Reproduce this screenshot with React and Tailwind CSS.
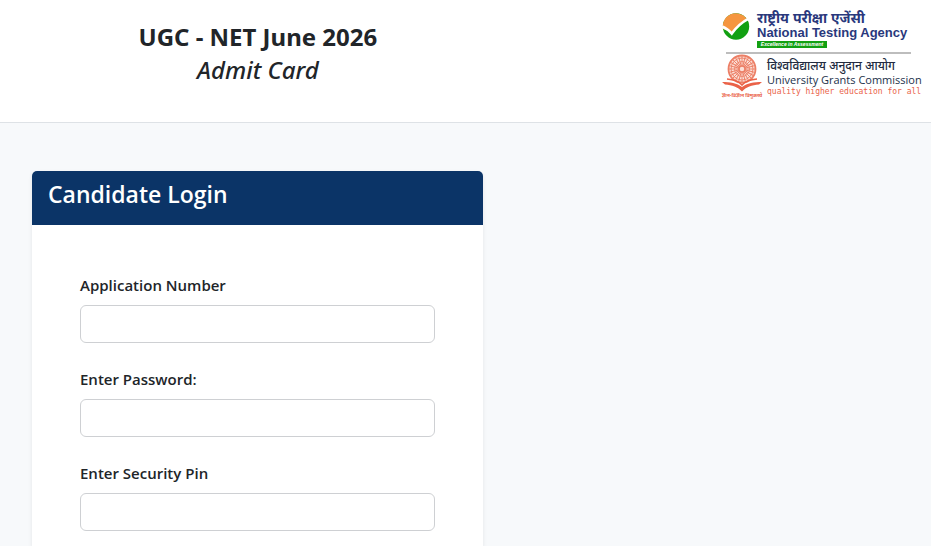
import React from 'react';

const fields = [
  { id: 'applicationNumber', label: 'Application Number', type: 'text' },
  { id: 'password', label: 'Enter Password:', type: 'password' },
  { id: 'securityPin', label: 'Enter Security Pin', type: 'text' },
];

const spokes = Array.from({ length: 24 }, (_, i) => i * 15);

const NtaMark = () => (
  <svg viewBox="0 0 28 28" className="h-7 w-7 shrink-0" aria-hidden="true">
    <circle cx="14" cy="14.5" r="13.2" fill="#12a012" />
    <path d="M1 17A13.2 13.2 0 0 1 24.6 6.6L10.5 20.5Z" fill="#f5953f" />
    <path d="M0 14.5C4 16 7 18.3 9.8 21.6C14 15.5 19.5 10.5 27 6.4" fill="none" stroke="#fff" strokeWidth="2.6" />
  </svg>
);

const UgcMark = () => (
  <svg viewBox="0 0 40 38" className="h-[38px] w-10 shrink-0" aria-hidden="true">
    <circle cx="20" cy="15" r="14" fill="#fbe0d8" />
    <g fill="none" stroke="#ec7f66">
      <circle cx="20" cy="15" r="13.5" strokeWidth="1.8" />
      <circle cx="20" cy="15" r="11" strokeWidth="0.9" />
      <circle cx="20" cy="15" r="7.5" strokeWidth="0.8" />
      <circle cx="20" cy="15" r="3" strokeWidth="1.5" />
      {spokes.map((angle) => (
        <path key={angle} d="M20 12V2" strokeWidth="0.9" transform={`rotate(${angle} 20 15)`} />
      ))}
    </g>
    <path
      d="M0 28C8 28 15 29 20 33C25 29 32 28 40 28L37 30.5C30 31 24 33 20 37.5C16 33 10 31 3 30.5Z"
      fill="#ea6248"
    />
    <path d="M5 25C12 25.5 17 27.5 20 31C23 27.5 28 25.5 35 25" fill="none" stroke="#ea6248" strokeWidth="1.6" />
  </svg>
);

const Logos = () => (
  <div className="w-[199px] shrink-0 pt-2.5">
    <div className="flex items-start">
      <div className="pt-0.5">
        <NtaMark />
      </div>
      <div className="pl-[7px] whitespace-nowrap text-[#29387c] font-['Liberation_Sans','Noto_Sans_Devanagari',sans-serif]">
        <p className="h-4 text-[14px] leading-4 font-bold">राष्ट्रीय परीक्षा एजेंसी</p>
        <p className="text-[13px] leading-[14px] font-bold">National Testing Agency</p>
        <p className="mt-px flex h-[7px] w-[70px] items-center justify-center bg-[#12a012] text-[5px] leading-[7px] font-bold text-white italic">
          Excellence in Assessment
        </p>
      </div>
    </div>
    <hr className="mt-1 mr-2.5 ml-1 border-t-2 border-[#bdbdbd]" />
    <div className="flex items-start">
      <div className="flex w-10 shrink-0 flex-col items-center">
        <UgcMark />
        <p className="text-[5px] leading-[7px] font-bold whitespace-nowrap text-[#ea6248]">ज्ञान-विज्ञान विमुक्तये</p>
      </div>
      <div className="pt-1 pl-[5px] whitespace-nowrap">
        <p className="h-4 text-[12px] leading-4 font-medium text-[#222b40]">विश्वविद्यालय अनुदान आयोग</p>
        <p className="text-[11px] leading-[12px] text-[#22304a]">University Grants Commission</p>
        <p className="text-[8px] leading-[12px] text-[#ea6248] font-['DejaVu_Sans_Mono',monospace]">
          quality higher education for all
        </p>
      </div>
    </div>
  </div>
);

const Header = () => (
  <header className="flex min-h-[123px] items-start justify-between border-b border-[#dee2e6] bg-white pr-2.5">
    <div className="w-[56%] pt-5 text-center text-2xl leading-[33px] font-['Noto_Sans',sans-serif]">
      <h1 className="font-bold">UGC - NET June 2026</h1>
      <p className="font-medium italic">Admit Card</p>
    </div>
    <Logos />
  </header>
);

const LoginCard = () => (
  <section className="w-[52%] rounded-t-[5px] bg-white shadow-[0_2px_4px_rgba(0,0,0,0.08)]">
    <h2 className="rounded-t-[5px] bg-[#0b3467] px-4 pt-[9px] pb-4 text-[23px] leading-[29px] font-semibold text-white">
      Candidate Login
    </h2>
    <form className="px-12 pt-12 pb-4">
      {fields.map((field) => (
        <div key={field.id} className="mb-6 last:mb-0">
          <label htmlFor={field.id} className="mb-2 block text-[15px] leading-6 font-semibold">
            {field.label}
          </label>
          <input
            id={field.id}
            type={field.type}
            className="block h-[38px] w-full rounded-md border border-[#ced0d3] bg-white px-3"
          />
        </div>
      ))}
    </form>
  </section>
);

const App = () => (
  <div className="min-h-screen bg-[#f7f9fb] text-[#212529] font-['Open_Sans','Noto_Sans',sans-serif]">
    <Header />
    <main className="px-8 pt-12">
      <LoginCard />
    </main>
  </div>
);

export default App;
